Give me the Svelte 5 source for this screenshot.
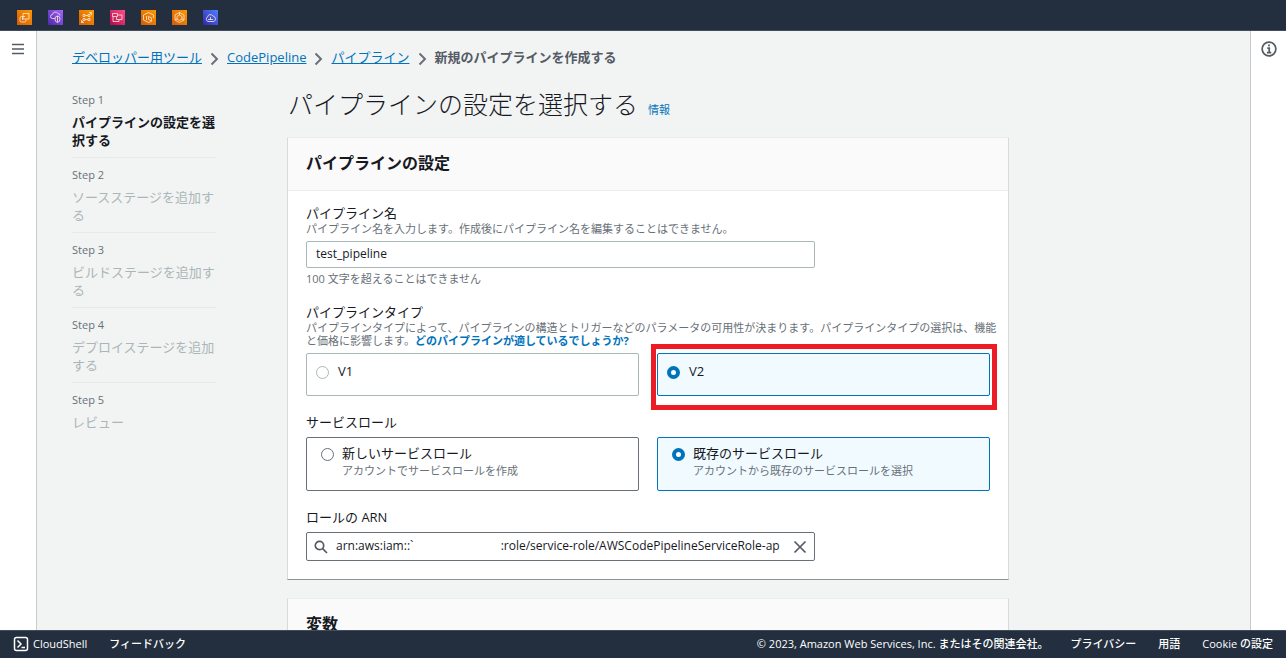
<script>
  const services = [
    { name: 'EC2', tone: 'orange', d: 'M6 3.500h6v5.500H6zM9 9v1.500q0 1.500-1.500 1.500H4.500Q3 12 3 10.500V8q0-1.500 1.500-1.500H6M8 6.500H5.500v3.500' },
    { name: 'CodePipeline', tone: 'purple', d: 'M7 8.500H4.500a2 2 0 0 1 0-4 3 3 0 0 1 5.500-1 2 2 0 0 1 2 2M9.500 6q2.500 0 2.500 3t-2.500 3.500Q7 12 7 9t2.500-3zM9.500 6v6' },
    { name: 'Auto Scaling', tone: 'orange', d: 'M4 4.500h2v2H4zM9 4.500h2v2H9zM4 8.500h2v2H4zM9 8.500h2v2H9zM6 5.500h3M6 9.500h3M10 2.500h2.500V5M12.500 2.500L11 4M2.500 10v2.500H5M2.500 12.500L4 11' },
    { name: 'EventBridge', tone: 'pink', d: 'M2.500 3.500h5v3h-5zM3 6.500v5h6v-2M7.500 5h4.500v4.500H6.500V7' },
    { name: 'ECR', tone: 'orange', d: 'M10.500 11.500l-3 1-5-2.500V5l5-2.500 5 2.500v3M5.500 6v4M7.500 6.500l3 1.500v3l-3-1.500z' },
    { name: 'ECS', tone: 'orange', d: 'M7.500 2.500l4.500 2.500v5l-4.500 2.500L3 10V5zM7.500 5l2.500 1.500v2.500l-2.500 1.500L5 9V6.500zM7.500 2.500V5M3 10l2-1M12 10l-2-1' },
    { name: 'CloudShell', tone: 'blue', d: 'M5 11.500a2.500 2.500 0 0 1-.5-4.500 3 3 0 0 1 5.500-1 3 3 0 0 1 1 5.500zM5 9.500h5M7.500 7v2.500' }
  ];
  const crumbs = ['デベロッパー用ツール', 'CodePipeline', 'パイプライン'];
  const steps = [
    'パイプラインの設定を選択する',
    'ソースステージを追加する',
    'ビルドステージを追加する',
    'デプロイステージを追加する',
    'レビュー'
  ];
  let name = $state('test_pipeline');
  let version = $state('V2');
  let role = $state('existing');
  let arn = $state('arn:aws:iam::`' + '\u00a0'.repeat(28) + ':role/service-role/AWSCodePipelineServiceRole-ap');
</script>

<div class="app">
  <header class="topbar">
    {#each services as s}
      <a href="#top" class="service {s.tone}" aria-label={s.name}>
        <svg viewBox="0 0 15 15"><path d={s.d} /></svg>
      </a>
    {/each}
  </header>

  <div class="middle">
    <aside class="rail left">
      <button aria-label="メニュー">
        <svg viewBox="0 0 14 14"><path d="M1 2.500h12M1 7h12M1 11.500h12" /></svg>
      </button>
    </aside>

    <main>
      <nav class="crumbs">
        {#each crumbs as c}
          <a href="#top">{c}</a>
          <svg viewBox="0 0 8 14"><path d="M1 1.500l5.500 5.500L1 12.500" /></svg>
        {/each}
        <span>新規のパイプラインを作成する</span>
      </nav>

      <div class="layout">
        <ol class="steps">
          {#each steps as s, i}
            <li class:current={i === 0}>
              <small>Step {i + 1}</small>
              <span>{s}</span>
            </li>
          {/each}
        </ol>

        <form class="content">
          <div class="title">
            <h1>パイプラインの設定を選択する</h1>
            <a href="#top">情報</a>
          </div>

          <section class="card">
            <h2>パイプラインの設定</h2>
            <div class="body">
              <div class="field">
                <label class="label" for="name">パイプライン名</label>
                <p class="desc">パイプライン名を入力します。作成後にパイプライン名を編集することはできません。</p>
                <input id="name" class="text" type="text" bind:value={name} />
                <p class="hint">100 文字を超えることはできません</p>
              </div>

              <fieldset class="field">
                <legend class="label">パイプラインタイプ</legend>
                <p class="desc">パイプラインタイプによって、パイプラインの構造とトリガーなどのパラメータの可用性が決まります。パイプラインタイプの選択は、機能と価格に影響します。<a href="#top">どのパイプラインが適しているでしょうか?</a></p>
                <div class="tiles">
                  <label class="tile small" class:selected={version === 'V1'}>
                    <input type="radio" value="V1" bind:group={version} /><span>V1</span>
                  </label>
                  <label class="tile small marked" class:selected={version === 'V2'}>
                    <input type="radio" value="V2" bind:group={version} /><span>V2</span>
                  </label>
                </div>
              </fieldset>

              <fieldset class="field">
                <legend class="label">サービスロール</legend>
                <div class="tiles">
                  <label class="tile large" class:selected={role === 'new'}>
                    <input type="radio" value="new" bind:group={role} />
                    <span>新しいサービスロール<small>アカウントでサービスロールを作成</small></span>
                  </label>
                  <label class="tile large" class:selected={role === 'existing'}>
                    <input type="radio" value="existing" bind:group={role} />
                    <span>既存のサービスロール<small>アカウントから既存のサービスロールを選択</small></span>
                  </label>
                </div>
              </fieldset>

              <div class="field">
                <label class="label" for="arn">ロールの ARN</label>
                <div class="search">
                  <svg viewBox="0 0 14 14"><circle cx="5.500" cy="5.500" r="4.200" /><path d="M8.600 8.600l4.400 4.400" /></svg>
                  <input id="arn" type="text" bind:value={arn} />
                  <button type="button" aria-label="クリア" onclick={() => (arn = '')}>
                    <svg viewBox="0 0 14 14"><path d="M1.500 1.500l11 11M12.500 1.500l-11 11" /></svg>
                  </button>
                </div>
              </div>
            </div>
          </section>

          <section class="card">
            <h2>変数</h2>
          </section>
        </form>
      </div>
    </main>

    <aside class="rail right">
      <button aria-label="情報">
        <svg viewBox="0 0 14 14"><circle cx="7" cy="7" r="6" /><path d="M5.500 6.200H7.200V10M5.200 10.200h3.800M6.200 3.900h1.600" /></svg>
      </button>
    </aside>
  </div>

  <footer>
    <a href="#top" class="shell">
      <svg viewBox="0 0 16 16"><rect x="1.500" y="1.500" width="13" height="13" rx="2" /><path d="M4.500 4.500L8 8l-3.500 3.500M8.500 11.500h3.500" /></svg>
      <span>CloudShell</span>
    </a>
    <a href="#top">フィードバック</a>
    <span class="copy">© 2023, Amazon Web Services, Inc. またはその関連会社。</span>
    <a href="#top">プライバシー</a>
    <a href="#top">用語</a>
    <a href="#top">Cookie の設定</a>
  </footer>
</div>

<style>
  :global(body) { margin: 0; }
  .app {
    display: grid;
    grid-template-rows: auto minmax(0, 1fr) auto;
    height: 100vh;
    font: 13px/18px "Open Sans", "Noto Sans CJK JP", sans-serif;
    color: #16191f;
    background: #f2f3f3;
  }
  .app * { box-sizing: border-box; }
  svg { display: block; fill: none; stroke: currentColor; }
  a { color: #0073bb; }
  button { padding: 0; border: 0; background: none; color: #545b64; cursor: pointer; }
  p, h1, h2, ol { margin: 0; }
  input { font: inherit; color: inherit; margin: 0; }

  .topbar {
    display: flex;
    gap: 16px;
    padding: 10px 17px 5px;
    background: #232f3e;
    border-bottom: 1px solid #414d5c;
  }
  .service { width: 15px; height: 15px; color: #ffe9d2; }
  .service svg { width: 15px; height: 15px; stroke-width: 0.8; }
  .orange { background: linear-gradient(45deg, #d45b07, #f90); }
  .purple { background: linear-gradient(45deg, #4d27aa, #a166ff); }
  .pink { background: linear-gradient(45deg, #b0084d, #ff4f8b); }
  .blue { background: linear-gradient(45deg, #2e27ad, #527fff); }

  .middle { display: grid; grid-template-columns: 37px minmax(0, 1fr) 36px; }
  .rail { background: #fff; }
  .left { border-right: 1px solid #c6cbcc; padding: 11px; }
  .right { border-left: 1px solid #c6cbcc; padding: 10px; }
  .rail svg { width: 14px; height: 14px; stroke-width: 1.7; }
  .right svg { width: 16px; height: 16px; stroke-width: 1.5; }

  main { overflow: hidden; padding: 17px 35px 0; }
  .crumbs { display: flex; align-items: center; gap: 8px; color: #545b64; font-weight: 600; }
  .crumbs a { font-weight: 400; }
  .crumbs svg { width: 9px; height: 14px; stroke: #687078; stroke-width: 2; margin-top: 4px; }

  .layout {
    display: grid;
    grid-template-columns: 144px minmax(0, 720px);
    gap: 72px;
    padding-top: 20px;
  }
  .steps { list-style: none; padding: 5px 0 0; }
  .steps li { border-bottom: 1px solid #e7eaea; padding-bottom: 8px; margin-bottom: 8px; color: #aab7b8; }
  .steps li:last-child { border: 0; }
  .steps small { display: block; font-size: 11px; line-height: 18px; color: #687078; margin-bottom: 4px; }
  .steps span { display: block; }
  .steps .current { color: #16191f; font-weight: 600; }
  .steps .current small { font-weight: 400; }

  .content { display: flex; flex-direction: column; gap: 18px; }
  .title { display: flex; align-items: baseline; gap: 10px; height: 33px; }
  h1 { font-size: 25px; line-height: 36px; font-weight: 300; }
  .title a { font-size: 11px; text-decoration: none; }
  .card {
    margin: 0 -1px;
    background: #fff;
    border: 1px solid #d5dbdb;
    border-top-color: #eaeded;
    border-bottom-color: #879596;
  }
  h2 {
    padding: 13px 18px 15px;
    font-size: 16px;
    line-height: 24px;
    font-weight: 700;
    background: #fafafa;
    border-bottom: 1px solid #eaeded;
  }
  .body { display: flex; flex-direction: column; gap: 17px; padding: 13px 18px 18px; }
  .field { min-width: 0; margin: 0; padding: 0; border: 0; }
  .label { display: block; padding: 0; margin: 0; }
  .desc { margin-right: -12px; font-size: 11px; line-height: 13px; color: #687078; }
  .desc a { font-weight: 700; text-decoration: none; }
  .hint { padding: 4px 0 1px; font-size: 11px; line-height: 13px; color: #687078; }
  .text {
    display: block;
    width: 509px;
    max-width: 100%;
    height: 27px;
    margin-top: 6px;
    padding: 0 9px 2px;
    border: 1px solid #aab7b8;
    border-radius: 2px;
    background: #fff;
    font-size: 12px;
  }
  .tiles { display: grid; grid-template-columns: 1fr 1fr; gap: 18px; margin-top: 6px; }
  .tile {
    position: relative;
    display: flex;
    gap: 9px;
    border: 1px solid #aab7b8;
    border-radius: 2px;
  }
  .tile.small { padding: 8px 9px 15px; }
  .tile.large { gap: 8px; padding: 6px 14px 10px; border-color: #687078; }
  .tile.selected { background: #f1faff; border-color: #0073bb; }
  .tile small { display: block; font-size: 11px; line-height: 18px; color: #687078; }
  .tile input {
    flex: none;
    appearance: none;
    width: 13px;
    height: 13px;
    margin-top: 4px;
    border: 1px solid #aab7b8;
    border-radius: 50%;
    background: #fff;
  }
  .tile.large input { border-color: #687078; }
  .tile input:checked, .tile.large input:checked { border: 4px solid #0073bb; }
  .marked::after {
    content: "";
    position: absolute;
    inset: -10px -8px -15px -7px;
    border: 5px solid #ed1c24;
    pointer-events: none;
  }
  .search {
    display: flex;
    align-items: center;
    gap: 8px;
    width: 509px;
    max-width: 100%;
    height: 29px;
    margin-top: 6px;
    padding: 0 7px;
    border: 1px solid #687078;
    border-radius: 2px;
    color: #545b64;
  }
  .search svg { flex: none; width: 14px; height: 14px; stroke-width: 1.7; }
  .search input { flex: 1; min-width: 0; padding: 0 0 2px; border: 0; outline: 0; background: none; color: #16191f; font-size: 12px; }

  footer {
    display: flex;
    align-items: center;
    gap: 22px;
    height: 28px;
    padding: 0 13px 2px;
    font-size: 11px;
    font-weight: 500;
    background: #232f3e;
    border-top: 1px solid #414d5c;
    color: #fff;
    white-space: nowrap;
  }
  footer a { color: #fff; text-decoration: none; }
  .shell { display: flex; align-items: center; gap: 4px; }
  .shell svg { width: 16px; height: 16px; stroke-width: 1.5; }
  .copy { margin-left: auto; }
</style>
